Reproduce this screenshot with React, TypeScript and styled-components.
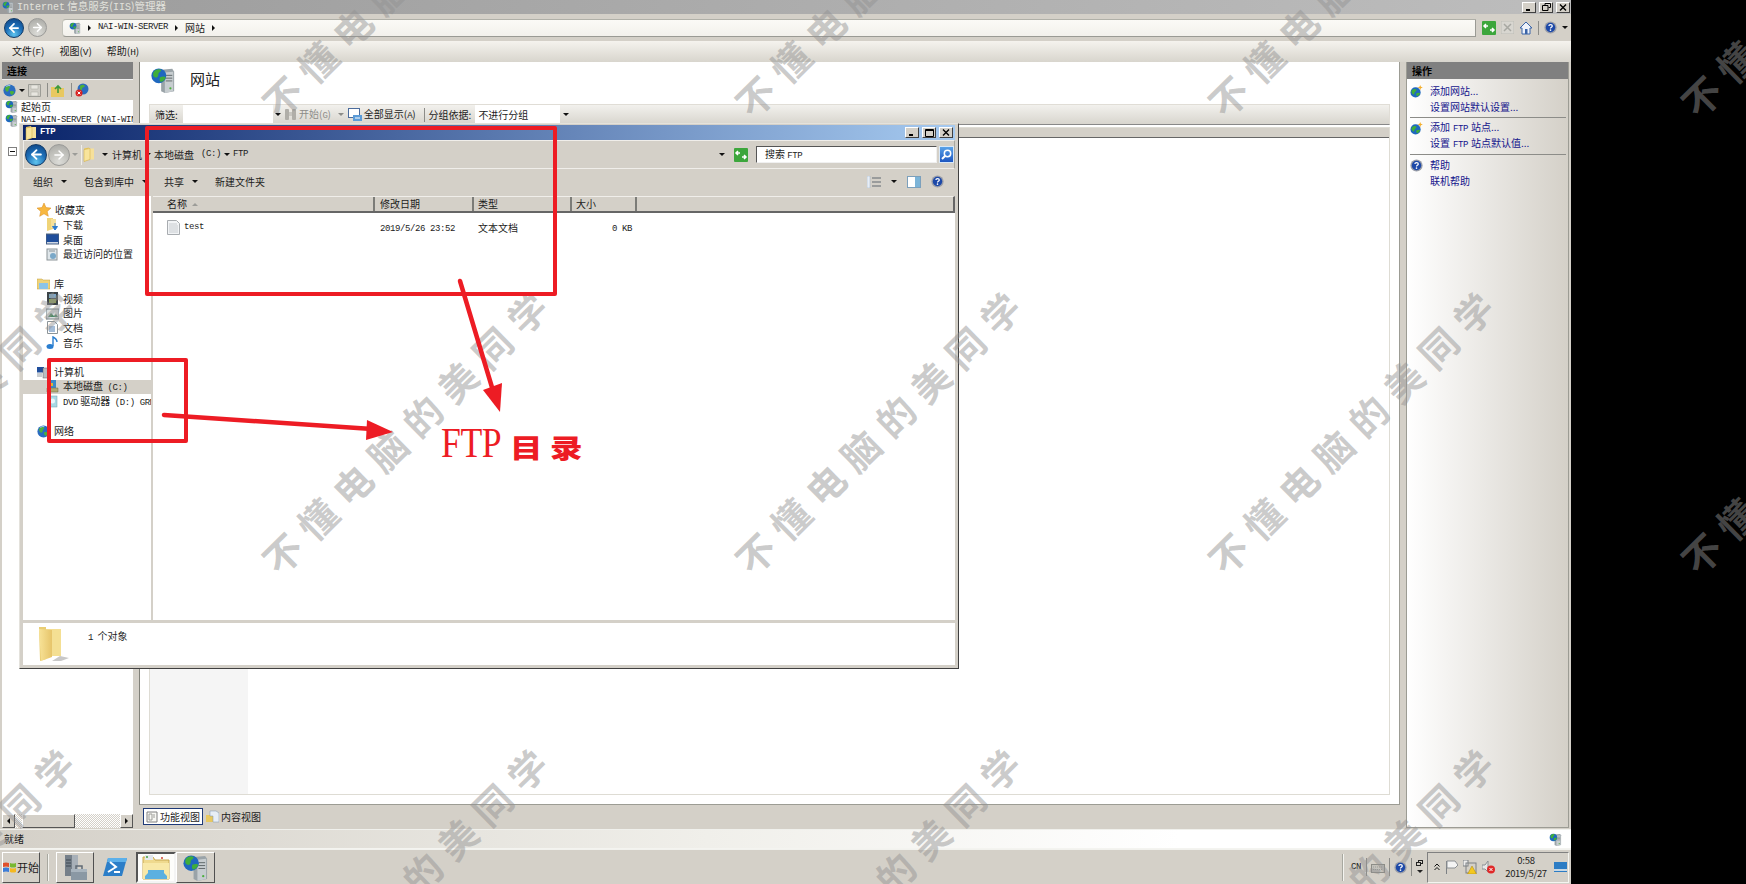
import React from 'react';
import styled, { createGlobalStyle } from 'styled-components';
import { ArrowLeft, ArrowRight } from 'lucide-react';

const Global = createGlobalStyle`
  html, body { margin: 0; padding: 0; background: #000; }
  * { box-sizing: border-box; }
  svg { flex: none; }
`;
const RED = '#ed1c24';
const GRAY = '#d4d0c8';

const Screen = styled.div`
  position: relative; width: 1746px; height: 884px; background: #000; overflow: hidden;
  font-family: "Noto Sans CJK SC", sans-serif; font-size: 10px; line-height: 1; color: #1c1c1c;
`;
const Lat = styled.span<{ $m?: string; $w?: number }>`
  font-family: "Liberation Mono", monospace; font-size: 9px; letter-spacing: -0.4px;
  ${p => (p.$m ? `margin: ${p.$m};` : '')} ${p => (p.$w ? `width: ${p.$w}px;` : '')}
`;
const Spaced = styled.span<{ $m?: string; $w?: number }>`
  ${p => (p.$m ? `margin: ${p.$m};` : '')} ${p => (p.$w ? `width: ${p.$w}px;` : '')} flex: none;
`;
const MainWindow = styled.div`
  width: 1571px; height: 884px; display: flex; flex-direction: column; background: ${GRAY};
`;
const TitleBar = styled.div`
  height: 14px; display: flex; align-items: center; gap: 3px; padding: 0 1px 0 2px; flex: none;
  background: linear-gradient(90deg, #9c9c9c, #bdbdbd); color: #e2e2dc;
`;
const TitleText = styled.span`
  flex: 1; font-size: 10.5px;
  & > span { font-size: 10px; letter-spacing: 0; }
`;
const WinBtn = styled.div`
  width: 14px; height: 11px; background: ${GRAY}; display: flex; align-items: center; justify-content: center;
  border: 1px solid; border-color: #fff #404040 #404040 #fff; flex: none;
`;
const NavBar = styled.div`
  height: 27px; flex: none; display: flex; align-items: center; padding: 0 4px; background: ${GRAY};
`;
const RoundBtn = styled.div<{ $on?: boolean; $size?: number; $ml?: number }>`
  width: ${p => p.$size ?? 20}px; height: ${p => p.$size ?? 20}px; border-radius: 50%; flex: none;
  margin-left: ${p => p.$ml ?? 0}px;
  display: flex; align-items: center; justify-content: center; color: #fff;
  border: 1px solid ${p => (p.$on ? '#123a66' : '#9a9a98')};
  background: ${p => (p.$on
    ? 'radial-gradient(circle at 50% 85%, #5fc4ee 0, #1d6fb8 48%, #0c3f7e 100%)'
    : 'radial-gradient(circle at 50% 85%, #dcdcd8 0, #bdbdb8 60%, #a4a4a0 100%)')};
`;
const AddressBar = styled.div`
  width: 1414px; height: 18px; margin: 0 6px 0 15px; display: flex; align-items: center; gap: 7px; padding: 0 6px;
  border-radius: 4px 0 0 4px; flex: none; border: 1px solid #9a9a94; border-left-color: #c4c4bc; border-top-color: #b0b0a8;
  background: linear-gradient(#fbfaf6, #f3f1ec);
`;
const Caret = styled.i<{ $dir?: 'r' | 'd' | 'l' | 'u'; $c?: string; $s?: number; $m?: string }>`
  display: block; width: 0; height: 0; flex: none;
  ${p => (p.$m ? `margin: ${p.$m};` : '')}
  ${p => {
    const s = p.$s ?? 3; const c = p.$c ?? '#111';
    if (p.$dir === 'r') return `border-top:${s}px solid transparent;border-bottom:${s}px solid transparent;border-left:${s}px solid ${c};`;
    if (p.$dir === 'l') return `border-top:${s}px solid transparent;border-bottom:${s}px solid transparent;border-right:${s}px solid ${c};`;
    if (p.$dir === 'u') return `border-left:${s}px solid transparent;border-right:${s}px solid transparent;border-bottom:${s}px solid ${c};`;
    return `border-left:${s}px solid transparent;border-right:${s}px solid transparent;border-top:${s}px solid ${c};`;
  }}
`;
const IconRow = styled.div`
  display: flex; align-items: center; gap: 5px; flex: none;
`;
const VSep = styled.i<{ $h?: number; $m?: string }>`
  display: block; width: 1px; height: ${p => p.$h ?? 14}px; background: #8c8c88; flex: none;
  ${p => (p.$m ? `margin: ${p.$m};` : '')}
`;
const MenuBar = styled.div`
  height: 21px; flex: none; display: flex; align-items: center; gap: 15px; padding-left: 12px;
  background: linear-gradient(#f5f3ee, #d8d5cd); font-size: 10px;
  & > span > span { font-size: 9.5px; letter-spacing: -0.1px; }
`;
const Workspace = styled.div`
  flex: 1; min-height: 0; display: grid; grid-template-columns: 131px 1261px 163px; gap: 7px; column-gap: 6px;
  padding: 0 0 1px 2px; background: ${GRAY};
`;
const LeftPanel = styled.div`
  display: flex; flex-direction: column; background: #fff; min-height: 0; overflow: hidden;
`;
const PaneHeader = styled.div`
  height: 17px; flex: none; background: #808080; color: #000; display: flex; align-items: center; padding-left: 5px;
  font-weight: 700; font-size: 10px;
`;
const PaneTools = styled.div`
  height: 21px; flex: none; display: flex; align-items: center; gap: 3px; padding-left: 1px; background: ${GRAY};
  border-top: 1px solid #eee;
`;
const Tree = styled.div`
  flex: 1; overflow: hidden; white-space: nowrap;
`;
const TreeRow = styled.div`
  height: 13px; margin-top: 0; display: flex; align-items: center; gap: 3px; padding-left: 3px;
  & + & { margin-top: 1px; }
`;
const TreeBox = styled.div`
  width: 9px; height: 9px; margin: 20px 0 0 6px; border: 1px solid #808080; display: flex; align-items: center; justify-content: center;
  &::after { content: ''; width: 5px; height: 1px; background: #111; }
`;
const HScroll = styled.div`
  height: 14px; flex: none; display: grid; grid-template-columns: 13px 7px 53px 1fr 13px;
  background: repeating-conic-gradient(#d4d0c8 0 25%, #fff 0 50%) 0 0 / 2px 2px;
`;
const ScrollBtn = styled.div`
  background: ${GRAY}; border: 1px solid; border-color: #fff #555 #555 #fff; display: flex; align-items: center; justify-content: center;
`;
const ScrollGap = styled.div``;
const CenterColumn = styled.div`
  display: flex; flex-direction: column; min-height: 0;
`;
const CenterPanel = styled.div`
  height: 743px; flex: none; background: #fff; border: 1px solid #9c9c94; border-top: 0; border-left-color: #808078;
  display: flex; flex-direction: column; padding: 0 9px 9px 9px;
`;
const CenterHead = styled.div`
  height: 42px; flex: none; display: flex; align-items: center; gap: 14px; padding: 0 0 6px 1px;
`;
const BigTitle = styled.span`
  font-size: 15px; margin-top: -4px; color: #222;
`;
const FilterBar = styled.div`
  height: 21px; flex: none; display: flex; align-items: center; padding-left: 5px; white-space: nowrap;
  background: linear-gradient(#f2f1ed, #d8d5ce); border: 1px solid #e0ddd6; border-bottom-color: #888;
`;
const FilterInput = styled.div<{ $w: number }>`
  width: ${p => p.$w}px; height: 19px; background: #fff; display: flex; align-items: center; padding-left: 3px; flex: none;
`;
const Muted = styled.span<{ $m?: string }>` color: #8c8c88; ${p => (p.$m ? `margin: ${p.$m};` : '')} `;
const ListFrame = styled.div`
  flex: 1; min-height: 0; margin-top: 2px; border: 1px solid #dedcd4; display: flex; flex-direction: column;
`;
const ListHead = styled.div`
  height: 10px; flex: none; background: ${GRAY}; border-bottom: 1px solid #666;
`;
const ListBody = styled.div` flex: 1; display: flex; background: #fff; `;
const ShadeCol = styled.div` width: 98px; background: #f5f5f5; `;
const Tabs = styled.div`
  flex: 1; display: flex; align-items: flex-start; padding: 3px 0 0 4px; gap: 0;
`;
const Tab = styled.div<{ $on?: boolean }>`
  height: 17px; display: flex; align-items: center; gap: 2px; padding: 0 2px 0 2px;
  font-size: 10px; border: 1px solid ${p => (p.$on ? '#1e3a78' : 'transparent')}; background: ${p => (p.$on ? '#fff' : 'transparent')};
`;
const RightPanel = styled.div`
  display: flex; flex-direction: column; border: 1px solid #9c9c94; border-top: 0; background: linear-gradient(90deg, #fff, ${GRAY});
`;
const ActionList = styled.div` padding: 4px 2px 0 3px; display: flex; flex-direction: column; `;
const ActionRow = styled.div`
  height: 16px; display: flex; align-items: center; gap: 7px; color: #14148c; white-space: nowrap;
`;
const ActionLabel = styled.span`
  & > span { margin: 0 3px; }
`;
const ActionSlot = styled.div` width: 13px; height: 13px; flex: none; `;
const ActionSep = styled.div` height: 1px; margin: 2px 0 2px 0; background: #8c8c88; `;
const StatusBar = styled.div`
  height: 20px; flex: none; display: flex; align-items: center; justify-content: space-between; padding: 0 9px 0 4px;
  background: linear-gradient(90deg, ${GRAY} 0, #f0efea 45%, #fff 75%); border-top: 1px solid #f0f0ec; border-bottom: 1px solid #f4f4f0;
`;
const Taskbar = styled.div`
  height: 35px; flex: none; display: flex; align-items: center; padding: 0 2px; background: ${GRAY}; border-top: 1px solid #f2f2ee;
`;
const TaskBtn = styled.div<{ $w: number; $mode?: 'flat' | 'active' | 'raised' }>`
  width: ${p => p.$w}px; height: 31px; display: flex; align-items: center; justify-content: center; gap: 1px; flex: none;
  font-size: 11px;
  ${p => (p.$mode === 'flat' ? '' : p.$mode === 'active'
    ? 'background:#fdfdfb;border:2px solid;border-color:#555 #f4f4f4 #f4f4f4 #555;'
    : 'border:1px solid;border-color:#fff #505050 #505050 #fff;')}
`;
const TaskSep = styled.i<{ $m?: string }>`
  display: block; width: 2px; height: 27px; margin: ${p => p.$m ?? '0 7px'}; background: #f4f4f0; border-left: 1px solid #a8a8a0; flex: none;
`;
const TaskSpacer = styled.div` flex: 1; `;
const Lang = styled.div`
  display: flex; align-items: center; gap: 4px; margin-right: 3px;
`;
const Tray = styled.div`
  width: 142px; height: 31px; display: flex; align-items: center; gap: 5px; padding: 0 3px 0 6px; flex: none;
  border: 1px solid; border-color: #808080 #f4f4f0 #f4f4f0 #808080;
`;
const Clock = styled.div`
  width: 46px; margin-left: 3px; display: flex; flex-direction: column; align-items: center; gap: 4px; flex: none;
  & > span { font-size: 9.5px; letter-spacing: -0.3px; }
`;

/* Explorer window */
const Explorer = styled.div`
  position: absolute; left: 19px; top: 123px; width: 940px; height: 546px; background: ${GRAY};
  display: flex; flex-direction: column; padding: 1px 3px 3px 3px;
  border: 1px solid; border-color: #e4e2dc #404040 #404040 #e4e2dc;
`;
const ExTitle = styled.div`
  height: 15px; flex: none; display: flex; align-items: center; gap: 3px; padding: 0 2px 0 2px; color: #fff; font-weight: 700;
  background: linear-gradient(90deg, #0a246a, #a6caf0);
`;
const ExTitleName = styled.span`
  flex: 1; font-family: "Liberation Mono", monospace; font-size: 9px; letter-spacing: -0.3px;
`;
const ExNav = styled.div`
  height: 29px; flex: none; display: flex; align-items: center; padding: 0 1px; border: 1px solid; border-color: #f0eeea #a8a8a0 #f0eeea #f0eeea;
`;
const ExAddress = styled.div`
  width: 647px; height: 20px; margin: 0 6px 0 3px; display: flex; align-items: center; gap: 3px; padding: 0 3px 0 1px; flex: none;
  border-left: 1px solid #f0eeea;
`;
const ExPathEnd = styled.div` flex: 1; display: flex; justify-content: flex-end; `;
const SearchBox = styled.div`
  width: 181px; height: 17px; margin-left: 8px; background: #fff; display: flex; align-items: center; padding-left: 8px; flex: none;
  border: 1px solid; border-color: #555 #f0f0f0 #f0f0f0 #555;
`;
const SearchBtn = styled.div`
  width: 15px; height: 17px; margin-left: 2px; background: linear-gradient(#5aa2e8, #1d56c0); display: flex; align-items: center; justify-content: center; flex: none;
  border: 1px solid #d8e8f8;
`;
const ExToolbar = styled.div`
  height: 27px; flex: none; display: flex; align-items: center; padding: 0 0 2px 10px; white-space: nowrap;
`;
const ToolItem = styled.div<{ $w: number }>`
  width: ${p => p.$w}px; display: flex; align-items: center; gap: 8px; flex: none;
`;
const ToolEnd = styled.div`
  margin-left: auto; display: flex; align-items: center; gap: 10px; padding-right: 11px;
`;
const ExBody = styled.div`
  flex: 1; min-height: 0; display: grid; grid-template-columns: 130px 1fr; background: #fff;
`;
const Side = styled.div`
  padding-top: 7px; border-right: 2px solid ${GRAY}; overflow: hidden; white-space: nowrap;
`;
const SideGroup = styled.div` margin-bottom: 15px; `;
const SideRow = styled.div<{ $sub?: boolean; $on?: boolean }>`
  height: 14.67px; display: flex; align-items: center; gap: 4px; padding-left: ${p => (p.$sub ? 23 : 14)}px;
  background: ${p => (p.$on ? GRAY : 'transparent')};
`;
const FileArea = styled.div` display: flex; flex-direction: column; min-width: 0; `;
const HeadRow = styled.div`
  height: 17px; flex: none; display: grid; grid-template-columns: 222px 99px 98px 65px 1fr; background: ${GRAY};
  border-bottom: 2px solid #666; border-top: 1px solid #f0eeea; border-right: 2px solid #666;
`;
const HeadCell = styled.div<{ $pad: number }>`
  display: flex; align-items: center; gap: 5px; padding-left: ${p => p.$pad}px; border-right: 2px solid #7c7c78;
  &:last-child { border-right: 0; }
`;
const FileRow = styled.div`
  height: 15px; margin-top: 7px; display: grid; grid-template-columns: 222px 99px 98px 65px; align-items: center;
`;
const FileName = styled.div` display: flex; align-items: center; gap: 4px; padding-left: 14px; `;
const FileCell = styled.div<{ $pad?: number }>` padding-left: ${p => p.$pad ?? 0}px; `;
const FileSize = styled.div` text-align: right; padding-right: 5px; `;
const Details = styled.div`
  height: 42px; flex: none; margin-top: 3px; background: #fff; display: flex; align-items: flex-start; padding: 3px 0 0 15px; gap: 19px;
`;
const DetailsText = styled.div` margin-top: 5px; `;

/* Overlays */
const WatermarkLayer = styled.div`
  position: absolute; inset: 0; overflow: hidden; pointer-events: none;
`;
const Watermark = styled.div<{ $x: number; $y: number }>`
  position: absolute; left: ${p => p.$x - 19}px; top: ${p => p.$y - 19}px; white-space: nowrap;
  transform-origin: 19px 19px; transform: rotate(-44.5deg);
  font-family: "Noto Sans CJK SC", sans-serif; font-weight: 700; font-size: 38px; line-height: 38px; letter-spacing: 11px;
  color: rgba(146,146,146,.47);
`;
const Annotations = styled.svg`
  position: absolute; left: 0; top: 0; pointer-events: none;
`;
const Label = styled.div`
  position: absolute; left: 441px; top: 423px; display: flex; align-items: center; color: ${RED}; white-space: nowrap;
`;
const LabelLatin = styled.span`
  font-family: "Liberation Serif", serif; font-size: 42px; line-height: 40px; width: 69px; transform: scaleX(.85); transform-origin: 0 50%; letter-spacing: -0.5px;
`;
const LabelCjk = styled.span`
  font-family: "Noto Sans CJK SC", sans-serif; font-weight: 900; font-size: 26px; letter-spacing: 6px; margin-top: 7px;
  transform: scaleX(1.25); transform-origin: 0 50%;
`;

/* ---------- drawings ---------- */
const Globe = ({ s = 12 }: { s?: number }) => (
  <svg width={s} height={s} viewBox="0 0 16 16">
    <circle cx="8" cy="8" r="7.5" fill="#2a6cc0" />
    <path d="M3 4c2-2 4-2 6-1 0 2-2 2-2 4s-2 3-3 2-2-3-1-5zM9 9c2-1 4 0 5 1-1 2-3 4-4 3s-2-3-1-4z" fill="#4caf3c" />
    <path d="M4 3a6 6 0 0 1 5-1" stroke="#bfe2ff" fill="none" />
  </svg>
);
const GlobeServer = ({ s = 14 }: { s?: number }) => (
  <svg width={s} height={s} viewBox="0 0 26 28">
    <path d="M11 3l12-1 2 3v21l-10 2-4-2z" fill="#9aa3a8" />
    <path d="M15 6l9-1v21l-9 2z" fill="#c7cdd0" />
    <path d="M16 9h7M16 12h7M16 15h7" stroke="#5e6668" />
    <circle cx="21" cy="23" r="1.2" fill="#4caf3c" />
    <circle cx="8.5" cy="9.5" r="8" fill="#1f68bf" />
    <path d="M3 5c3-3 6-3 8-2 0 3-3 2-3 5s-2 4-4 3-2-4-1-6zM10 11c2-1 5-1 6 0-1 3-3 5-5 5s-2-4-1-5z" fill="#3fae3a" />
  </svg>
);
const GlobeStar = () => (
  <svg width="13" height="13" viewBox="0 0 14 14">
    <circle cx="6" cy="8" r="5.5" fill="#1f68bf" />
    <path d="M2 6c2-2 4-2 5-1 0 2-2 2-2 3s-1 3-2 2-2-3-1-4zM7 9c1-1 3-1 4 0-1 2-2 3-3 3s-2-2-1-3z" fill="#3fae3a" />
    <path d="M11 0l.8 2 2 .8-2 .8-.8 2-.8-2-2-.8 2-.8z" fill="#f4b030" />
  </svg>
);
const Help = ({ s = 13 }: { s?: number }) => (
  <svg width={s} height={s} viewBox="0 0 16 16">
    <circle cx="8" cy="8" r="7.5" fill="#9a9ea8" />
    <circle cx="8" cy="8" r="5.8" fill="#1c48a8" />
    <path d="M6 6.2c0-2.4 4.2-2.4 4.2 0 0 1.6-2.2 1.5-2.2 3" stroke="#fff" strokeWidth="1.5" fill="none" />
    <circle cx="8" cy="11.3" r="1" fill="#fff" />
  </svg>
);
const Folder = ({ w = 12, h = 14 }: { w?: number; h?: number }) => (
  <svg width={w} height={h} viewBox="0 0 12 14">
    <path d="M1 1l5-1v12l-5 2z" fill="#e8c860" />
    <path d="M5 1h6v11H5z" fill="#f6e09a" />
    <path d="M1 2l6-1v11l-6 2z" fill="#f8e49c" stroke="#cfa93e" strokeWidth=".5" />
  </svg>
);
const Refresh = () => (
  <svg width="14" height="14" viewBox="0 0 14 14">
    <rect width="14" height="14" rx="1" fill="#3ca63c" />
    <path d="M2 5h4M4 3L2 5l2 2M12 9H8M10 7l2 2-2 2" stroke="#fff" strokeWidth="1.5" fill="none" />
  </svg>
);
const StopIco = () => (
  <svg width="13" height="13" viewBox="0 0 13 13">
    <rect width="13" height="13" fill="#d8d6d0" stroke="#bdbdb6" />
    <path d="M3 3l7 7M10 3l-7 7" stroke="#a8a8a2" strokeWidth="1.5" />
  </svg>
);
const HomeIco = () => (
  <svg width="14" height="14" viewBox="0 0 14 14">
    <path d="M7 1L1 7h2v6h8V7h2z" fill="#eef2fa" stroke="#3a64a8" />
    <rect x="6" y="8" width="2.5" height="5" fill="#3a64a8" />
  </svg>
);
const Save = () => (
  <svg width="13" height="13" viewBox="0 0 13 13"><path d="M.5.5h12v12H.5z" fill="#cfcdc6" stroke="#9c9c96" /><path d="M3 1h7v4H3zM3 8h7v4H3z" fill="#e8e6e0" stroke="#a8a8a2" strokeWidth=".5" /></svg>
);
const UpFolder = () => (
  <svg width="13" height="13" viewBox="0 0 13 13"><path d="M0 3h5l1 1h7v9H0z" fill="#e8c860" /><path d="M7 9V3M4 5l3-3 3 3" stroke="#3c9a3c" strokeWidth="1.6" fill="none" /></svg>
);
const Connect = () => (
  <svg width="14" height="14" viewBox="0 0 14 14"><circle cx="8" cy="6" r="5.5" fill="#2a6cc0" /><path d="M5 3c2-2 4-1 5 0-1 2-3 1-3 3s-2 1-2 0z" fill="#4caf3c" /><circle cx="4" cy="10" r="3.5" fill="#d82424" /><path d="M2.6 8.6l2.8 2.8M5.4 8.6l-2.8 2.8" stroke="#fff" /></svg>
);
const TxtFile = () => (
  <svg width="13" height="15" viewBox="0 0 13 15"><path d="M.5.5h9l3 3v11H.5z" fill="#f2f4f6" stroke="#a8acb0" /><path d="M2 4h8M2 6h9M2 8h9M2 10h9M2 12h9" stroke="#c8ccd0" /></svg>
);
const StarIco = () => (
  <svg width="14" height="14" viewBox="0 0 14 14"><path d="M7 0l2 4.6 5 .5-3.800 3.300 1.100 4.900L7 10.800 2.700 13.300l1.100-4.900L0 5.100l5-.5z" fill="#f8b840" stroke="#d88818" strokeWidth=".5" /></svg>
);
const Small = ({ kind }: { kind: string }) => {
  const p = { width: 13, height: 13, viewBox: '0 0 13 13' };
  switch (kind) {
    case 'star': return <StarIco />;
    case 'down': return <svg {...p}><path d="M1 0h6v11l-6 2z" fill="#f0d478" /><path d="M5 1h5v9H5z" fill="#f6e09a" /><path d="M9 5v5M6.500 8.500L9 12l2.500-3.500z" stroke="#2a7ad0" fill="#2a7ad0" /></svg>;
    case 'desk': return <svg {...p}><rect x="0" y="1" width="13" height="10" fill="#1f4e9c" stroke="#52647c" /><rect x="1" y="9" width="11" height="1.500" fill="#d0d8e4" /></svg>;
    case 'recent': return <svg {...p}><rect x="1" y="1" width="10" height="11" fill="#dfe6ea" stroke="#8c9498" /><circle cx="7" cy="8" r="3" fill="#7aa8c8" /><path d="M3 3h6" stroke="#8c9498" /></svg>;
    case 'lib': return <svg {...p}><path d="M0 2h5l1 1h7v9H0z" fill="#efd37a" stroke="#c09c3c" strokeWidth=".5" /><path d="M2 6h9v6H2z" fill="#8cc4e8" /></svg>;
    case 'video': return <svg {...p}><rect x="1" y="0" width="11" height="13" fill="#3c4448" /><rect x="3" y="2" width="7" height="4" fill="#7ca8c8" /><rect x="3" y="7" width="7" height="4" fill="#8c9c58" /></svg>;
    case 'pic': return <svg {...p}><rect x="0" y="2" width="13" height="10" fill="#d8dee0" stroke="#788488" /><path d="M2 10l3-4 3 3 2-2 2 3z" fill="#4f8a68" /></svg>;
    case 'doc': return <svg {...p}><path d="M1.500.5h7l3 3v9h-10z" fill="#fff" stroke="#8c9498" /><path d="M3 6h6M3 8h6M3 10h6" stroke="#4a7ab0" /></svg>;
    case 'music': return <svg {...p}><ellipse cx="4" cy="10.500" rx="3.500" ry="2.500" fill="#2a7ed0" /><path d="M7 10V1c2 1 4 2 4 5" stroke="#2a7ed0" strokeWidth="1.400" fill="none" /></svg>;
    case 'pc': return <svg {...p}><rect x="0" y="1" width="7" height="5.500" fill="#1f4e9c" /><rect x="6" y="2" width="6" height="10" fill="#b8bcc0" stroke="#606468" strokeWidth=".5" /><rect x="0" y="7" width="5" height="4" fill="#c8ccd0" /></svg>;
    case 'disk': return <svg {...p}><path d="M4 0h6v8H4z" fill="#3c8ac8" /><path d="M1 8h11v4H1z" fill="#b0a870" stroke="#6c6844" strokeWidth=".5" /><path d="M4 3h3v3H4z" fill="#e0b430" /></svg>;
    case 'dvd': return <svg {...p}><rect x="2" y="1" width="9" height="11" fill="#a8d8e4" stroke="#70a0ac" strokeWidth=".5" /><circle cx="6.500" cy="6" r="2.500" fill="#e8f6fa" /></svg>;
    default: return <Globe s={13} />;
  }
};
const Binoc = () => (
  <svg width="13" height="13" viewBox="0 0 13 13"><rect x="1" y="1" width="4" height="11" rx="1" fill="#b0aea8" /><rect x="8" y="1" width="4" height="11" rx="1" fill="#b0aea8" /><rect x="5" y="4" width="3" height="4" fill="#c8c6c0" /></svg>
);
const ShowAll = () => (
  <svg width="14" height="14" viewBox="0 0 14 14"><rect x=".5" y=".5" width="11" height="9" fill="#fff" stroke="#4c6c9c" /><rect x="5" y="7" width="9" height="6" fill="#5c9cd8" /><path d="M7 10h5" stroke="#fff" /></svg>
);
const Glass = () => (
  <svg width="11" height="11" viewBox="0 0 11 11"><circle cx="6.500" cy="4.500" r="3.200" fill="none" stroke="#fff" strokeWidth="1.500" /><path d="M4 7L1 10" stroke="#fff" strokeWidth="2" /></svg>
);
const ViewIco = () => (
  <svg width="14" height="12" viewBox="0 0 14 12"><path d="M0 0h3v12H0z" fill="#e8eef6" stroke="#9cb0c8" strokeWidth=".5" /><path d="M5 2h9M5 6h9M5 10h9" stroke="#606870" /></svg>
);
const PreviewIco = () => (
  <svg width="14" height="12" viewBox="0 0 14 12"><rect x=".5" y=".5" width="13" height="11" fill="#fff" stroke="#7ca0bc" /><rect x="8" y="1" width="5" height="10" fill="#7cb4d8" /></svg>
);
const WinFlag = () => (
  <svg width="13" height="13" viewBox="0 0 13 13"><path d="M0 2q3-1 6 0v4q-3-1-6 0z" fill="#e0502c" /><path d="M7 2q3 1 6 0v4q-3 1-6 0z" fill="#78b830" /><path d="M0 7q3-1 6 0v4q-3-1-6 0z" fill="#3c7cd8" /><path d="M7 7q3 1 6 0v4q-3 1-6 0z" fill="#f4b820" /></svg>
);
const ServerTools = () => (
  <svg width="26" height="27" viewBox="0 0 26 27"><path d="M3 1h12v21H3z" fill="#76808a" /><path d="M10 1h6v21h-6z" fill="#a8b0b8" /><path d="M4 6h5M4 9h5M4 12h5" stroke="#3c4650" /><path d="M9 15h16v11H9z" fill="#8a98a4" /><path d="M9 15h16v3H9z" fill="#a8b4be" /><path d="M14 15v-3h6v3" fill="none" stroke="#606a74" strokeWidth="1.500" /></svg>
);
const PowerShell = () => (
  <svg width="24" height="20" viewBox="0 0 24 20"><path d="M5 1h19l-5 18H0z" fill="#2c7ec8" /><path d="M5 1h19l-1 4H4z" fill="#5cb0ea" /><path d="M7 5l6 5-8 5" fill="none" stroke="#fff" strokeWidth="2" /><path d="M11 15h6" stroke="#fff" strokeWidth="2" /></svg>
);
const OpenFolder = () => (
  <svg width="28" height="26" viewBox="0 0 28 26"><path d="M1 3h10l2 3h14v19H1z" fill="#efd98e" stroke="#c8a850" /><rect x="3" y="1" width="8" height="5" fill="#e4e8ec" /><circle cx="5" cy="3" r="1" fill="#42a040" /><circle cx="20" cy="4" r="1" fill="#d04030" /><path d="M1 9h26v16H1z" fill="#f8e8a8" /><path d="M6 16h16v3l3 3v3H3v-3l3-3z" fill="#5cb0e0" /></svg>
);
const Tip = () => (
  <svg width="12" height="12" viewBox="0 0 12 12"><path d="M1 1h10v10H1z" fill="#f8f8f4" stroke="#808080" /><path d="M3 3h3v6H3zM7 4h2M7 6h2" stroke="#9c9c98" fill="none" /></svg>
);
const ContentIco = () => (
  <svg width="13" height="13" viewBox="0 0 13 13"><path d="M0 5h5l1 1h3v6H0z" fill="#e8c860" /><path d="M4 1h6l3 2v9H7V6H4z" fill="#e8eef6" stroke="#7c94b0" strokeWidth=".5" /></svg>
);
const KeyboardIco = () => (
  <svg width="14" height="13" viewBox="0 0 14 13"><rect x=".5" y="3.500" width="13" height="8" fill="#c4c2bc" stroke="#8c8c86" /><path d="M2 6h10M2 8.500h10" stroke="#9c9c96" strokeDasharray="1 1" /></svg>
);
const TrayFlag = () => (
  <svg width="13" height="14" viewBox="0 0 13 14"><path d="M1.500 1v13" stroke="#7c8084" /><path d="M2 1h8l3 4-3 3H2z" fill="#f4f4f4" stroke="#8c9094" /></svg>
);
const TrayNet = () => (
  <svg width="14" height="14" viewBox="0 0 14 14"><rect x="0" y="0" width="5" height="6" fill="#eee" stroke="#7c8084" /><rect x="3" y="3" width="10" height="10" fill="none" stroke="#7c8084" /><path d="M9 6l4.500 8h-9z" fill="#f4c820" stroke="#a88410" strokeWidth=".5" /></svg>
);
const TraySound = () => (
  <svg width="13" height="14" viewBox="0 0 13 14"><path d="M0 5h3l3-4v11L3 9H0z" fill="#e8e8e8" stroke="#8c9094" /><circle cx="9" cy="9.500" r="4" fill="#e02828" /><path d="M7.500 8l3 3M10.500 8l-3 3" stroke="#fff" /></svg>
);
const DesktopIco = () => (
  <svg width="13" height="13" viewBox="0 0 13 13"><rect width="13" height="10" y="1" fill="#2c7cc4" /><rect y="8" width="13" height="2" fill="#c8d8e4" /></svg>
);
const BigFolder = () => (
  <svg width="31" height="36" viewBox="0 0 31 36">
    <defs><linearGradient id="bf" x1="0" x2="1"><stop offset="0" stopColor="#f8e398" /><stop offset="1" stopColor="#e6c46a" /></linearGradient></defs>
    <path d="M22 30l9 2-8 3H14z" fill="#c8c8c8" />
    <path d="M1 1l7 0v32l-6 2z" fill="#e9cd73" />
    <path d="M8 3h15v27H8z" fill="#f4df93" />
    <path d="M1 3l13 1v27L3 35z" fill="url(#bf)" />
  </svg>
);
const MinGlyph = () => <svg width="8" height="7" viewBox="0 0 8 7"><path d="M1 6h4" stroke="#000" strokeWidth="2" /></svg>;
const MaxGlyph = () => <svg width="9" height="8" viewBox="0 0 9 8"><path d="M.5.5h8v7h-8z M.5 1.500h8" stroke="#000" fill="none" /></svg>;
const RestoreGlyph = () => <svg width="9" height="8" viewBox="0 0 9 8"><path d="M3 2V.5h5.500v4H6.500M.5 2.500h5.500v5H.5z" stroke="#000" fill="none" /></svg>;
const CloseGlyph = () => <svg width="8" height="7" viewBox="0 0 8 7"><path d="M1 .5l6 6M7 .5l-6 6" stroke="#000" strokeWidth="1.400" /></svg>;
const Chevrons = () => <svg width="6" height="8" viewBox="0 0 6 8"><path d="M.5 3.500L3 1l2.500 2.500M.5 7L3 4.500 5.500 7" stroke="#111" fill="none" /></svg>;
const WindowsGlyph = () => <svg width="8" height="14" viewBox="0 0 8 14"><rect x="2.500" y=".5" width="4" height="3" fill="none" stroke="#222" /><rect x=".5" y="2.500" width="4" height="3" fill="#d4d0c8" stroke="#222" /><path d="M1 10h6l-3 3z" fill="#222" /></svg>;

const marks: [number, number][] = [];
for (const y of [96, 553, 1010]) for (const x of [-191, 282, 755, 1228, 1701]) marks.push([x, y]);

const SIDE = [
  { head: ['star', '收藏夹'], rows: [['down', '下载'], ['desk', '桌面'], ['recent', '最近访问的位置']] },
  { head: ['lib', '库'], rows: [['video', '视频'], ['pic', '图片'], ['doc', '文档'], ['music', '音乐']] },
];

export default function App() {
  return (
    <Screen>
      <Global />
      <MainWindow>
        <TitleBar>
          <GlobeServer s={12} />
          <TitleText><Lat>Internet</Lat> 信息服务(<Lat>IIS</Lat>)管理器</TitleText>
          <WinBtn><MinGlyph /></WinBtn>
          <WinBtn><RestoreGlyph /></WinBtn>
          <WinBtn><CloseGlyph /></WinBtn>
        </TitleBar>
        <NavBar>
          <RoundBtn $on><ArrowLeft size={14} strokeWidth={3} /></RoundBtn>
          <RoundBtn $size={19} $ml={4}><ArrowRight size={13} strokeWidth={3} /></RoundBtn>
          <AddressBar>
            <GlobeServer s={12} />
            <Caret $dir="r" />
            <Lat>NAI-WIN-SERVER</Lat>
            <Caret $dir="r" />
            <span>网站</span>
            <Caret $dir="r" />
          </AddressBar>
          <IconRow>
            <Refresh />
            <StopIco />
            <HomeIco />
            <VSep />
            <Help />
            <Caret />
          </IconRow>
        </NavBar>
        <MenuBar>
          <span>文件(<Lat>F</Lat>)</span>
          <span>视图(<Lat>V</Lat>)</span>
          <span>帮助(<Lat>H</Lat>)</span>
        </MenuBar>
        <Workspace>
          <LeftPanel>
            <PaneHeader>连接</PaneHeader>
            <PaneTools>
              <Globe s={13} /><Caret /><Save /><VSep $m="0 0 0 3px" /><UpFolder /><VSep $m="0 0 0 4px" /><Connect />
            </PaneTools>
            <Tree>
              <TreeRow><GlobeServer s={13} /><span>起始页</span></TreeRow>
              <TreeRow><GlobeServer s={13} /><Lat>NAI-WIN-SERVER (NAI-WIN</Lat></TreeRow>
              <TreeBox />
            </Tree>
            <HScroll>
              <ScrollBtn><Caret $dir="l" /></ScrollBtn>
              <ScrollGap />
              <ScrollBtn />
              <ScrollGap />
              <ScrollBtn><Caret $dir="r" /></ScrollBtn>
            </HScroll>
          </LeftPanel>
          <CenterColumn>
            <CenterPanel>
              <CenterHead>
                <GlobeServer s={26} />
                <BigTitle>网站</BigTitle>
              </CenterHead>
              <FilterBar>
                <Spaced $w={28}>筛选:</Spaced>
                <FilterInput $w={90} />
                <Caret $m="0 3px 0 2px" />
                <Binoc />
                <Muted $m="0 7px 0 2px">开始(<Lat>G</Lat>)</Muted>
                <Caret $c="#8c8c88" $m="0 4px 0 0" />
                <ShowAll />
                <Spaced $m="0 8px 0 2px">全部显示(<Lat>A</Lat>)</Spaced>
                <VSep />
                <Spaced $m="0 4px">分组依据:</Spaced>
                <FilterInput $w={85}>不进行分组</FilterInput>
                <Caret $m="0 0 0 3px" />
              </FilterBar>
              <ListFrame>
                <ListHead />
                <ListBody><ShadeCol /></ListBody>
              </ListFrame>
            </CenterPanel>
            <Tabs>
              <Tab $on><Tip />功能视图</Tab>
              <Tab><ContentIco />内容视图</Tab>
            </Tabs>
          </CenterColumn>
          <RightPanel>
            <PaneHeader>操作</PaneHeader>
            <ActionList>
              <ActionRow><GlobeStar />添加网站...</ActionRow>
              <ActionRow><ActionSlot />设置网站默认设置...</ActionRow>
              <ActionSep />
              <ActionRow><GlobeStar /><ActionLabel>添加<Lat>FTP</Lat>站点...</ActionLabel></ActionRow>
              <ActionRow><ActionSlot /><ActionLabel>设置<Lat>FTP</Lat>站点默认值...</ActionLabel></ActionRow>
              <ActionSep />
              <ActionRow><Help />帮助</ActionRow>
              <ActionRow><ActionSlot />联机帮助</ActionRow>
            </ActionList>
          </RightPanel>
        </Workspace>
        <StatusBar>
          <span>就绪</span>
          <GlobeServer s={13} />
        </StatusBar>
        <Taskbar>
          <TaskBtn $w={38}><WinFlag />开始</TaskBtn>
          <TaskSep />
          <TaskBtn $w={38}><ServerTools /></TaskBtn>
          <TaskBtn $w={42} $mode="flat"><PowerShell /></TaskBtn>
          <TaskBtn $w={40} $mode="active"><OpenFolder /></TaskBtn>
          <TaskBtn $w={39}><GlobeServer s={27} /></TaskBtn>
          <TaskSpacer />
          <Lang>
            <TaskSep $m="0 3px 0 0" />
            <Lat $w={11}>CN</Lat>
            <VSep $h={18} />
            <KeyboardIco />
            <VSep $h={18} />
            <Help s={13} />
            <VSep $h={18} />
            <WindowsGlyph />
          </Lang>
          <Tray>
            <Chevrons />
            <TrayFlag />
            <TrayNet />
            <TraySound />
            <Clock>
              <span>0:58</span>
              <span>2019/5/27</span>
            </Clock>
            <DesktopIco />
          </Tray>
        </Taskbar>
      </MainWindow>

      <Explorer>
        <ExTitle>
          <Folder />
          <ExTitleName>FTP</ExTitleName>
          <WinBtn><MinGlyph /></WinBtn>
          <WinBtn><MaxGlyph /></WinBtn>
          <WinBtn><CloseGlyph /></WinBtn>
        </ExTitle>
        <ExNav>
          <RoundBtn $on $size={22}><ArrowLeft size={15} strokeWidth={3} /></RoundBtn>
          <RoundBtn $size={22} $ml={1}><ArrowRight size={14} strokeWidth={2.5} /></RoundBtn>
          <Caret $c="#9c9c98" $m="0 0 0 2px" />
          <ExAddress>
            <Folder w={12} h={15} />
            <Caret $m="0 1px 0 4px" />
            <span>计算机</span>
            <Caret />
            <Spaced $m="0 4px 0 0">本地磁盘</Spaced>
            <Lat>(C:)</Lat>
            <Caret />
            <Lat>FTP</Lat>
            <ExPathEnd><Caret /></ExPathEnd>
          </ExAddress>
          <Refresh />
          <SearchBox><span>搜索&nbsp;<Lat>FTP</Lat></span></SearchBox>
          <SearchBtn><Glass /></SearchBtn>
        </ExNav>
        <ExToolbar>
          <ToolItem $w={51}>组织<Caret /></ToolItem>
          <ToolItem $w={80}>包含到库中<Caret /></ToolItem>
          <ToolItem $w={51}>共享<Caret /></ToolItem>
          <ToolItem $w={60}>新建文件夹</ToolItem>
          <ToolEnd>
            <ViewIco />
            <Caret />
            <PreviewIco />
            <Help />
          </ToolEnd>
        </ExToolbar>
        <ExBody>
          <Side>
            {SIDE.map(g => (
              <SideGroup key={g.head[1]}>
                <SideRow><Small kind={g.head[0]} /><span>{g.head[1]}</span></SideRow>
                {g.rows.map(r => <SideRow $sub key={r[1]}><Small kind={r[0]} /><span>{r[1]}</span></SideRow>)}
              </SideGroup>
            ))}
            <SideGroup>
              <SideRow><Small kind="pc" /><span>计算机</span></SideRow>
              <SideRow $sub $on><Small kind="disk" /><span>本地磁盘 &nbsp;<Lat>(C:)</Lat></span></SideRow>
              <SideRow $sub><Small kind="dvd" /><span><Lat>DVD</Lat> 驱动器 &nbsp;<Lat>(D:) GRMSXVOL_CN_DVD</Lat></span></SideRow>
            </SideGroup>
            <SideGroup>
              <SideRow><Small kind="net" /><span>网络</span></SideRow>
            </SideGroup>
          </Side>
          <FileArea>
            <HeadRow>
              <HeadCell $pad={14}>名称<Caret $dir="u" $c="#9c9c98" /></HeadCell>
              <HeadCell $pad={5}>修改日期</HeadCell>
              <HeadCell $pad={4}>类型</HeadCell>
              <HeadCell $pad={4}>大小</HeadCell>
              <HeadCell $pad={0} />
            </HeadRow>
            <FileRow>
              <FileName><TxtFile /><Lat>test</Lat></FileName>
              <FileCell $pad={5}><Lat>2019/5/26 23:52</Lat></FileCell>
              <FileCell $pad={4}>文本文档</FileCell>
              <FileSize><Lat>0 KB</Lat></FileSize>
            </FileRow>
          </FileArea>
        </ExBody>
        <Details>
          <BigFolder />
          <DetailsText><Lat>1</Lat>&nbsp; 个对象</DetailsText>
        </Details>
      </Explorer>

      <WatermarkLayer>
        {marks.map(([x, y]) => <Watermark key={`${x}-${y}`} $x={x} $y={y}>不懂电脑的美同学</Watermark>)}
      </WatermarkLayer>

      <Annotations width="1746" height="884" viewBox="0 0 1746 884">
        <g fill="none" stroke={RED} strokeWidth="4" strokeLinejoin="round" strokeLinecap="round">
          <rect x="147" y="128" width="408" height="166" />
          <rect x="49" y="360" width="137" height="81" />
        </g>
        <g fill="none" stroke={RED} strokeWidth="4.500" strokeLinecap="round">
          <path d="M460 281L494 394" />
          <path d="M164 415L372 429" />
        </g>
        <polygon points="500,412 483,390 502,383" fill={RED} />
        <polygon points="393,432 367,420 366,440" fill={RED} />
      </Annotations>
      <Label>
        <LabelLatin>FTP</LabelLatin>
        <LabelCjk>目录</LabelCjk>
      </Label>
    </Screen>
  );
}
